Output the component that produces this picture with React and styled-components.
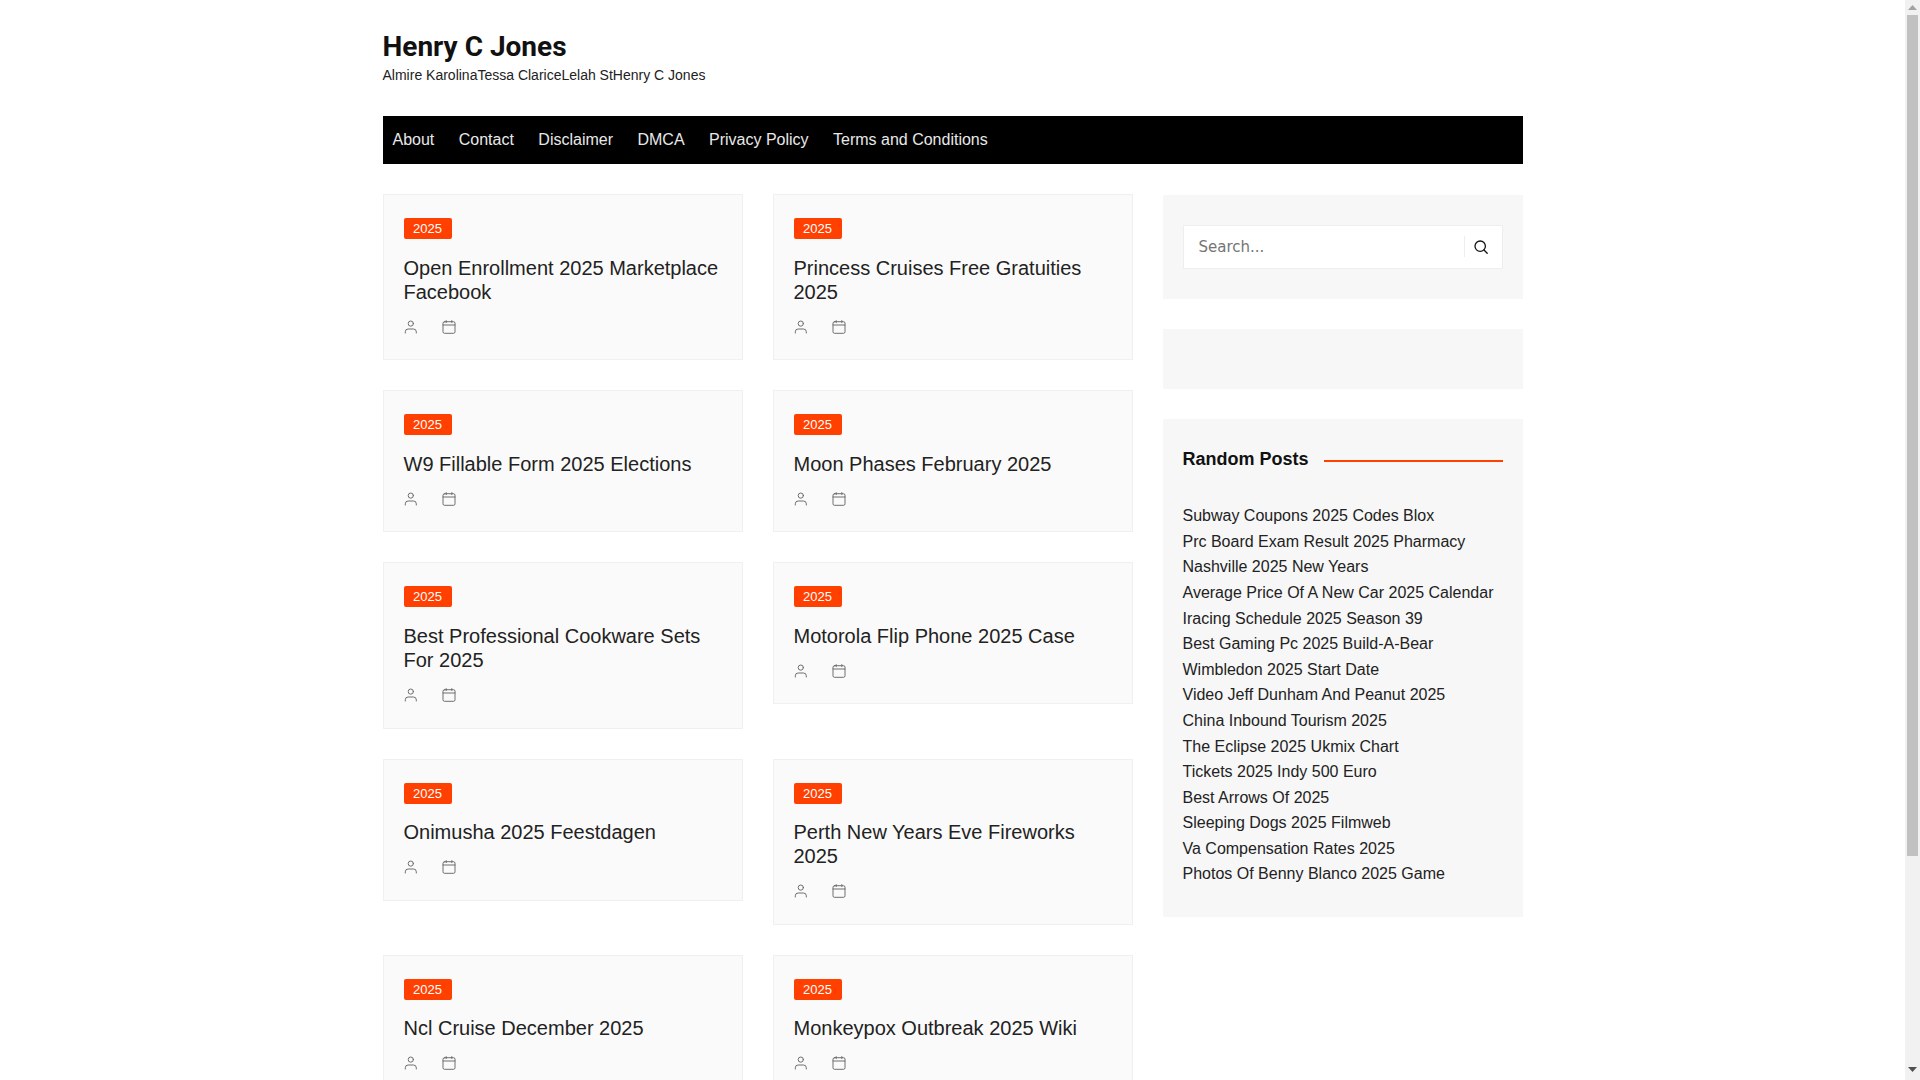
import React from "react";
import styled, { createGlobalStyle } from "styled-components";

const Global = createGlobalStyle`
  html, body { margin: 0; padding: 0; background: #fff; }
  body { font-family: "Liberation Sans", Arial, sans-serif; color: #222; font-size: 16px; }
  * { box-sizing: border-box; }
`;

const Viewport = styled.div`
  width: 1905px;
`;
const Page = styled.div`
  width: 1140px;
  min-height: 1348px;
  margin: 0 auto;
`;
const Scrollbar = styled.div`
  position: fixed;
  top: 0;
  right: 0;
  bottom: 0;
  width: 15px;
  background: #f1f1f1;
`;
const Thumb = styled.div`
  position: absolute;
  top: 15px;
  left: 2px;
  width: 11px;
  height: 841px;
  background: #c1c1c1;
`;
const Arrow = styled.svg`
  position: absolute;
  left: 3px;
  width: 9px;
  height: 5px;
  top: ${(p) => (p.$down ? "1067px" : "5px")};
  fill: ${(p) => (p.$down ? "#505050" : "#a3a3a3")};
`;
const Header = styled.header`
  padding: 31px 0 0;
  height: 116px;
`;
const SiteTitle = styled.h1`
  margin: 0;
  font-family: Roboto, "Liberation Sans", sans-serif;
  font-size: 28px;
  line-height: 32px;
  font-weight: 700;
  color: #111;
`;
const Tagline = styled.p`
  margin: 2px 0 0;
  font-size: 14px;
  line-height: 20px;
  color: #222;
`;
const Nav = styled.nav`
  display: flex;
  gap: 4.45px;
  height: 48px;
  align-items: center;
  background: #000;
`;
const NavLink = styled.a`
  padding: 0 10px;
  font-size: 16px;
  color: #e8e8e8;
`;
const Columns = styled.div`
  display: flex;
  gap: 30px;
  align-items: flex-start;
  margin-top: 30.2px;
`;
const Grid = styled.main`
  display: grid;
  grid-template-columns: 360px 360px;
  gap: 30px;
  align-items: start;
  width: 750px;
`;
const Card = styled.article`
  background: #fafafa;
  border: 1px solid #f0f0f0;
  padding: 23px 20px 25.7px;
`;
const Badge = styled.span`
  display: block;
  width: 48px;
  height: 21px;
  line-height: 21px;
  text-align: center;
  font-size: 13px;
  color: #fff;
  background: #ff4000;
  border-radius: 2px;
`;
const CardTitle = styled.h2`
  margin: 16.5px 0 0;
  font-size: 20px;
  line-height: 24.2px;
  font-weight: 400;
  color: #222;
`;
const Meta = styled.div`
  display: flex;
  gap: 24px;
  margin-top: 15.6px;
  height: 14px;
`;
const MetaIcon = styled.svg`
  width: 14px;
  height: 14px;
  fill: none;
  stroke: #6e6e6e;
  stroke-width: 1;
  stroke-linecap: round;
  stroke-linejoin: round;
`;
const Sidebar = styled.aside`
  width: 360px;
  display: flex;
  flex-direction: column;
  gap: 30px;
  padding-top: 0.8px;
`;
const Widget = styled.section`
  background: #f7f7f7;
  padding: ${(p) => p.$pad || "0 20px"};
  height: ${(p) => p.$h || "auto"};
`;
const SearchBox = styled.form`
  display: flex;
  align-items: center;
  height: 44px;
  background: #fff;
  border: 1px solid #eee;
`;
const SearchInput = styled.input`
  flex: 1;
  min-width: 0;
  border: 0;
  outline: 0;
  background: transparent;
  padding: 0 15px;
  font-family: "DejaVu Sans", sans-serif;
  font-size: 15px;
  &::placeholder { color: #757575; opacity: 1; }
`;
const SearchButton = styled.button`
  display: flex;
  align-items: center;
  justify-content: center;
  width: 34px;
  height: 21px;
  margin-right: 4px;
  padding: 0;
  border: 0;
  border-left: 1px solid #eee;
  background: transparent;
`;
const SearchIcon = styled.svg`
  width: 14px;
  height: 14px;
  fill: none;
  stroke: #111;
  stroke-width: 1.3;
  stroke-linecap: round;
`;
const WidgetHead = styled.div`
  display: flex;
  align-items: center;
  gap: 15px;
  margin-top: -1px;
`;
const WidgetTitle = styled.h3`
  margin: 0;
  font-size: 18px;
  line-height: 22px;
  font-weight: 700;
  color: #111;
`;
const Rule = styled.span`
  flex: 1;
  height: 2px;
  margin-top: 5px;
  background: #ff4000;
`;
const PostList = styled.ul`
  list-style: none;
  margin: 33.2px 0 0;
  padding: 0;
`;
const PostItem = styled.li`
  font-size: 16px;
  line-height: 25.6px;
  color: #222;
`;

const UserIcon = () => (
  <MetaIcon viewBox="0 0 14 14">
    <circle cx="6.8" cy="3.6" r="2.6" />
    <path d="M1.3 13v-1.2a2.8 2.8 0 0 1 2.8-2.8h5.4a2.8 2.8 0 0 1 2.8 2.8V13" />
  </MetaIcon>
);
const CalendarIcon = () => (
  <MetaIcon viewBox="0 0 14 14">
    <rect x="1" y="1.7" width="12" height="11.6" rx="1.5" />
    <path d="M1 5h12M4.2 .6v2M9.8 .6v2" />
  </MetaIcon>
);

const navItems = ["About", "Contact", "Disclaimer", "DMCA", "Privacy Policy", "Terms and Conditions"];
const posts = [
  "Open Enrollment 2025 Marketplace Facebook",
  "Princess Cruises Free Gratuities 2025",
  "W9 Fillable Form 2025 Elections",
  "Moon Phases February 2025",
  "Best Professional Cookware Sets For 2025",
  "Motorola Flip Phone 2025 Case",
  "Onimusha 2025 Feestdagen",
  "Perth New Years Eve Fireworks 2025",
  "Ncl Cruise December 2025",
  "Monkeypox Outbreak 2025 Wiki",
];
const random = [
  "Subway Coupons 2025 Codes Blox",
  "Prc Board Exam Result 2025 Pharmacy",
  "Nashville 2025 New Years",
  "Average Price Of A New Car 2025 Calendar",
  "Iracing Schedule 2025 Season 39",
  "Best Gaming Pc 2025 Build-A-Bear",
  "Wimbledon 2025 Start Date",
  "Video Jeff Dunham And Peanut 2025",
  "China Inbound Tourism 2025",
  "The Eclipse 2025 Ukmix Chart",
  "Tickets 2025 Indy 500 Euro",
  "Best Arrows Of 2025",
  "Sleeping Dogs 2025 Filmweb",
  "Va Compensation Rates 2025",
  "Photos Of Benny Blanco 2025 Game",
];

export default function App() {
  return (
    <>
      <Global />
      <Viewport>
        <Page>
          <Header>
            <SiteTitle>Henry C Jones</SiteTitle>
            <Tagline>Almire KarolinaTessa ClariceLelah StHenry C Jones</Tagline>
          </Header>
          <Nav>
            {navItems.map((n) => (
              <NavLink key={n}>{n}</NavLink>
            ))}
          </Nav>
          <Columns>
            <Grid>
              {posts.map((t) => (
                <Card key={t}>
                  <Badge>2025</Badge>
                  <CardTitle>{t}</CardTitle>
                  <Meta>
                    <UserIcon />
                    <CalendarIcon />
                  </Meta>
                </Card>
              ))}
            </Grid>
            <Sidebar>
              <Widget $pad="30px 20px" $h="104px">
                <SearchBox onSubmit={(e) => e.preventDefault()}>
                  <SearchInput placeholder="Search..." />
                  <SearchButton type="button" aria-label="Search">
                    <SearchIcon viewBox="0 0 14 14">
                      <circle cx="6.2" cy="6.2" r="5.2" />
                      <path d="M10 10l3.2 3.2" />
                    </SearchIcon>
                  </SearchButton>
                </SearchBox>
              </Widget>
              <Widget $h="60px" />
              <Widget $pad="30px 20px">
                <WidgetHead>
                  <WidgetTitle>Random Posts</WidgetTitle>
                  <Rule />
                </WidgetHead>
                <PostList>
                  {random.map((r) => (
                    <PostItem key={r}>{r}</PostItem>
                  ))}
                </PostList>
              </Widget>
            </Sidebar>
          </Columns>
        </Page>
      </Viewport>
      <Scrollbar>
        <Arrow viewBox="0 0 9 5">
          <path d="M4.5 0L9 5H0z" />
        </Arrow>
        <Thumb />
        <Arrow $down viewBox="0 0 9 5">
          <path d="M0 0h9L4.5 5z" />
        </Arrow>
      </Scrollbar>
    </>
  );
}
